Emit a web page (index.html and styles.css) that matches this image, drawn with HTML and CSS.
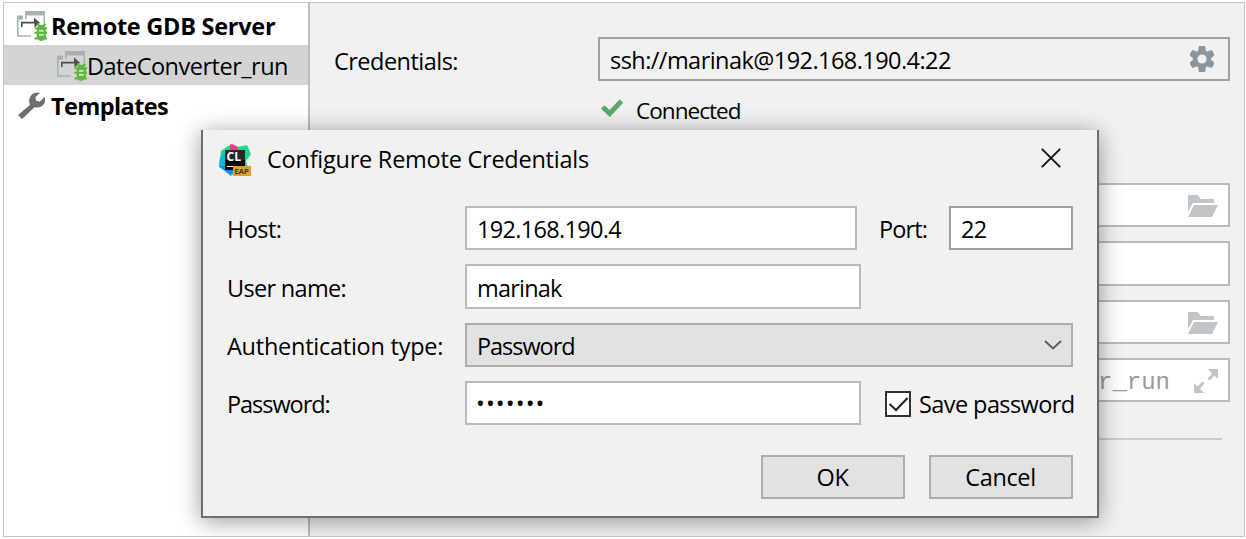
FILE: index.html
```html
<!DOCTYPE html>
<html lang="en">
<head>
<meta charset="utf-8">
<title>Run Configurations</title>
<link rel="stylesheet" href="styles.css">
</head>
<body>
<svg class="defs" aria-hidden="true">
  <symbol id="remote" viewBox="0 0 30 30">
    <path fill="#a6b1b8" d="M8 0h20v12h-1.500V4.500H9.500V8H8zM0 4.500h6v4H1.600v15.800H14v1.500H0z"/>
    <path fill="#4d4d4d" d="M4 10.800h13V6.500l6 5.300-5.500 4.700v-4.100H5.600V16H4z"/>
    <path fill="none" stroke="#62b543" stroke-width="2.100" d="M20.300 12.500l2.500 3M28.300 12.500l-2.500 3M17.600 17.300h2.700l2 2M31 17.300h-2.700l-2 2M17.300 21.800h14M17.600 27.400h2.700l2-2.500M31 27.400h-2.700l-2-2.500"/>
    <path fill="#62b543" d="M19.700 18.500q.4-4.700 4.600-4.700t4.600 4.700v6q-.5 5.200-4.600 5.500-4.100-.3-4.600-5.500z"/>
    <path stroke="#fff" stroke-width="1.300" d="M22 19.800h4.600M22 23.800h4.600"/>
  </symbol>
  <symbol id="folder" viewBox="0 0 30 22">
    <path fill="#bfc5c9" d="M0 0h10l2.500 4H26v4H5L0 17zM6 10h24l-6 12H0z"/>
  </symbol>
</svg>

<div class="frame">
  <nav class="tree">
    <div class="node bold"><svg class="run-icon"><use href="#remote"/></svg><span class="t-server">Remote GDB Server</span></div>
    <div class="node child"><svg class="run-icon"><use href="#remote"/></svg><span class="t-date">DateConverter_run</span></div>
    <div class="node bold">
      <svg class="run-icon" viewBox="0 0 30 30"><path fill="#6e6e6e" d="M1 24 13 14Q10.500 7 15.500 3 19 .5 23 2L18.500 6l.5 3.800 3.800.7L27.700 6q1.500 5-2 8.500-3.400 3-8.200 1.700L5 28z"/></svg>
      <span class="t-templates">Templates</span></div>
  </nav>

  <main class="settings">
    <div class="setting first"><span class="t-cred">Credentials:</span>
      <div class="box strong"><span class="t-ssh">ssh://marinak@192.168.190.4:22</span>
        <svg class="gear" viewBox="-12 -13 24 26"><g fill="#8b959d"><circle r="9"/><path id="tooth" d="M-3-13h6l1 5h-8zM-3 13h6l1-5h-8z"/><use href="#tooth" transform="rotate(60)"/><use href="#tooth" transform="rotate(120)"/></g><circle r="4.600" fill="#f1f1f1"/></svg>
      </div>
    </div>
    <div class="status"><svg class="tick" viewBox="0 0 22 18"><path d="M1.700 8l7 6.500L20.500 2" fill="none" stroke="#59a869" stroke-width="5"/></svg><span class="t-conn">Connected</span></div>
    <div class="setting"><div class="box"><svg class="folder"><use href="#folder"/></svg></div></div>
    <div class="setting"><div class="box tall"></div></div>
    <div class="setting"><div class="box"><svg class="folder"><use href="#folder"/></svg></div></div>
    <div class="setting"><div class="box"><span class="mono">er_run</span>
      <svg class="expand" viewBox="0 0 24 24"><path fill="#bfc5c9" d="M14 0h10v10l-3.500-3.500-5 5-2-2 4.500-5zM0 14l3.500 3.500 5-5 2 2-4.500 5L10 24H0z"/></svg></div></div>
    <div class="rule"></div>
  </main>

  <section class="dialog">
    <header class="title">
      <svg class="app" viewBox="0 0 32 32">
        <path fill="#21d789" d="M2 7 12 0l7 3 9-2 4 9-5 7 3 10-17 4L0 22z"/>
        <path fill="#ff318c" d="M11 1l2-1 6 3-1 5h-7z"/>
        <path fill="#12b5d5" d="M1 14l8-7v22L0 23z"/>
        <path fill="#078efc" d="M0 22h16l-4 10z"/>
        <path fill="#080808" d="M6 6h20v20H6z"/><path fill="#282828" d="M6 6h20v10H6z"/>
        <path fill="#fff" d="M8 22h6v1H8z"/><path fill="#dda12f" d="M14 22h18v10H14z"/>
        <text class="cl" x="7.500" y="17">CL</text><text class="eap" x="15.400" y="30.200">EAP</text>
      </svg>
      <span class="t-title">Configure Remote Credentials</span>
      <svg class="close" viewBox="0 0 20 20"><path d="M.8.800l18.400 18.400M19.200.800.800 19.200" stroke="#111" stroke-width="1.900"/></svg>
    </header>
    <div class="form">
      <div class="row"><label class="t-host">Host:</label><div class="input host"><span class="t-ip">192.168.190.4</span></div><label class="port-label t-port">Port:</label><div class="input port"><span class="t-22">22</span></div></div>
      <div class="row tall"><label class="t-user">User name:</label><div class="input mid"><span class="t-marinak">marinak</span></div></div>
      <div class="row"><label class="t-auth">Authentication type:</label><div class="input select"><span class="t-pass">Password</span>
        <svg class="chevron" viewBox="0 0 18 10"><path d="M1 1l8 7.500L17 1" fill="none" stroke="#5a5a5a" stroke-width="1.900"/></svg></div></div>
      <div class="row"><label class="t-passlabel">Password:</label><div class="input mid"><span class="dots">•••••••</span></div>
        <svg class="checkbox" viewBox="0 0 26 26"><path fill="#fff" stroke="#333" stroke-width="2" d="M1 1h24v24H1z"/><path d="M4.500 13l6.500 6L22.500 7" fill="none" stroke="#222" stroke-width="2"/></svg><span class="t-save">Save password</span></div>
    </div>
    <footer class="buttons"><button><span class="t-ok">OK</span></button><button><span class="t-cancel">Cancel</span></button></footer>
  </section>
</div>
</body>
</html>
```
FILE: styles.css
```css
* { box-sizing: border-box; }
body {
  margin: 0;
  padding: 2px 0 0 3px;
  overflow: hidden;
  background: #fff;
  color: #000;
  font: 23.5px/32px "Open Sans", "Noto Sans", sans-serif;
  white-space: nowrap;
}
svg { display: block; flex: none; }
.defs { width: 0; height: 0; position: absolute; }

.frame {
  position: relative;
  display: flex;
  width: 1242px;
  height: 535px;
  border: 1px solid #c4c4c4;
  background: #f1f1f1;
  overflow: hidden;
}
.tree {
  flex: none;
  width: 306px;
  padding-top: 2px;
  background: #fff;
  border-right: 2px solid #bdbdbd;
}
.node { display: flex; align-items: center; height: 40px; padding: 2px 0 0 13px; }
.node.bold { font-weight: 700; gap: 4px; }
.node.child { padding: 2px 0 0 53px; background: #d4d4d4; }
.run-icon { width: 30px; height: 30px; margin-top: -1px; overflow: visible; }
.t-server { letter-spacing: -.27px; }
.t-date { letter-spacing: -.5px; }
.t-templates { letter-spacing: -.6px; }

.settings { flex: 1; display: flex; flex-direction: column; align-items: flex-start; padding: 34px 0 0 24px; }
.setting { display: flex; align-items: center; justify-content: flex-end; width: 896px; margin-bottom: 14px; }
.setting.first { justify-content: space-between; margin: 0; }
.t-cred { padding-top: 3px; letter-spacing: -.52px; }
.t-ssh { letter-spacing: -.55px; }
.box {
  display: flex;
  align-items: center;
  justify-content: flex-end;
  width: 632px;
  height: 44px;
  padding: 2px 10px 0;
  border: 2px solid #bababa;
  background: #fff;
}
.box.tall { height: 45px; }
.box.strong { justify-content: space-between; border-color: #a0a0a0; background: #f1f1f1; }
.gear { width: 24px; height: 26px; margin: -2px 4px 0 0; }
.status { display: flex; align-items: center; gap: 13px; height: 32px; margin: 14px 0 56px 267px; font-size: 22.500px; }
.tick { width: 22px; height: 18px; margin-top: -6px; }
.t-conn { letter-spacing: -.95px; }
.folder { width: 30px; height: 22px; }
.mono { font: 24px/32px "Courier New", "Liberation Mono", monospace; color: #999; margin-right: 24px; padding-top: 3px; }
.expand { width: 24px; height: 24px; }
.rule { width: 888px; height: 2px; margin-top: 22px; background: #cbcbcb; }

.dialog {
  position: absolute;
  left: 197px;
  top: 127px;
  width: 898px;
  height: 388px;
  border: solid #6e6e6e;
  border-width: 0 2px 2px;
  background: #f1f1f1;
  box-shadow: 0 3px 22px rgba(0, 0, 0, .4);
}
.title { display: flex; align-items: center; height: 58px; padding: 2px 36px 0 16px; }
.app { width: 32px; height: 32px; margin-right: 16px; }
.cl { font: 700 12px "Open Sans", sans-serif; fill: #fff; }
.eap { font: 600 7.800px "Open Sans", sans-serif; fill: #231a05; }
.t-title { letter-spacing: -.24px; margin-top: -2px; }
.close { width: 20px; height: 20px; margin: -4px 0 0 auto; }
.form { display: grid; grid-template-rows: 58px 59px 58px 44px; padding: 18px 0 0 24px; }
.row { display: flex; align-items: center; height: 44px; }
.row > label:first-child { width: 238px; padding-top: 2px; }
.row.tall, .row.tall .input { height: 45px; }
.row.tall > label:first-child, .row.tall .input { padding-top: 3px; }
.input { display: flex; align-items: center; height: 44px; padding: 2px 10px 0; border: 2px solid #bababa; background: #fff; }
.host { width: 392px; }
.mid { width: 396px; }
.port { width: 124px; border-color: #a0a0a0; }
.port-label { width: 70px; margin-left: 22px; padding-top: 2px; }
.select { width: 608px; justify-content: space-between; background: #e2e2e2; border-color: #adadad; }
.chevron { width: 18px; height: 10px; margin: -2px -1px 0 0; }
.dots { letter-spacing: 1.100px; margin: -2px 0 0 -1px; }
.checkbox { width: 26px; height: 26px; margin: 2px 8px 0 24px; }
.t-host { letter-spacing: -.55px; }
.t-ip { letter-spacing: -.68px; }
.t-port { letter-spacing: -.9px; }
.t-22 { letter-spacing: -.6px; }
.t-user { letter-spacing: -.68px; }
.t-marinak { letter-spacing: -.8px; }
.t-auth { letter-spacing: -.25px; }
.t-pass, .t-passlabel { letter-spacing: -1.050px; }
.t-save { padding-top: 2px; letter-spacing: -.58px; }
.t-ok, .t-cancel { letter-spacing: -.35px; }
.buttons { display: flex; justify-content: flex-end; gap: 24px; padding: 30px 24px 0 0; }
button { width: 144px; height: 44px; padding: 0 1px 0 0; border: 2px solid #adadad; background: #e2e2e2; color: #000; font: inherit; }
```
